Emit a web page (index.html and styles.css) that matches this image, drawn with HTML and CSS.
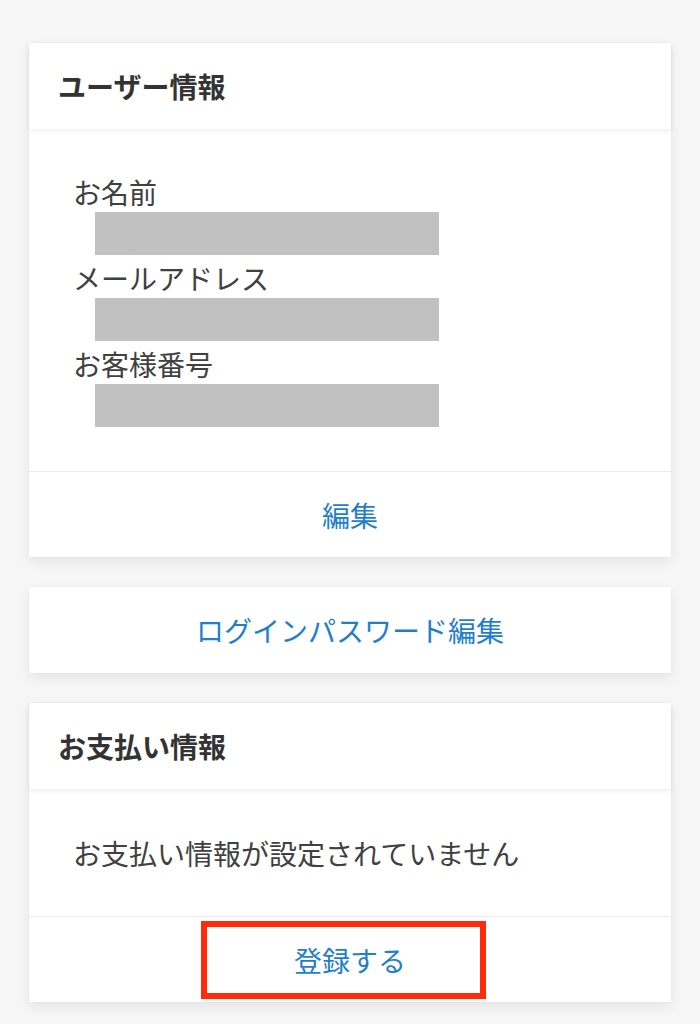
FILE: index.html
```html
<!DOCTYPE html>
<html lang="ja">
<head>
<meta charset="utf-8">
<title>ユーザー情報</title>
<link rel="stylesheet" href="styles.css">
</head>
<body>
<main class="page">
  <section class="card">
    <header class="card-header">ユーザー情報</header>
    <div class="card-body info">
      <div class="field">
        <div class="label">お名前</div>
        <div class="mask"></div>
      </div>
      <div class="field">
        <div class="label">メールアドレス</div>
        <div class="mask"></div>
      </div>
      <div class="field">
        <div class="label">お客様番号</div>
        <div class="mask"></div>
      </div>
    </div>
    <div class="card-footer"><a class="link">編集</a></div>
  </section>

  <section class="card">
    <div class="card-row"><a class="link">ログインパスワード編集</a></div>
  </section>

  <section class="card">
    <header class="card-header">お支払い情報</header>
    <div class="card-body message">お支払い情報が設定されていません</div>
    <div class="card-footer annotated">
      <a class="link">登録する</a>
      <span class="highlight"></span>
    </div>
  </section>
</main>
</body>
</html>
```

FILE: styles.css
```css
html, body {
  margin: 0;
  padding: 0;
}
body {
  background: #f6f6f6;
  font-family: "Noto Sans CJK JP", "Noto Sans", sans-serif;
  color: #3a3a3a;
}
.page {
  display: flex;
  flex-direction: column;
  gap: 30px;
  padding: 43px 29px 20px;
}
.card {
  background: #fff;
  box-shadow: 0 5px 12px rgba(0, 0, 0, 0.07), 0 0 3px rgba(0, 0, 0, 0.04);
  display: flex;
  flex-direction: column;
}
.card-header {
  height: 86px;
  display: flex;
  align-items: center;
  padding-left: 29px;
  font-size: 28px;
  font-weight: 700;
  color: #333;
  box-shadow: 0 2px 5px rgba(0, 0, 0, 0.07);
  position: relative;
  z-index: 1;
}
.card-body {
  padding-left: 44px;
}
.info {
  padding-top: 45px;
  padding-bottom: 44px;
  display: flex;
  flex-direction: column;
  gap: 5px;
}
.field {
  display: flex;
  flex-direction: column;
  gap: 2px;
}
.label {
  font-size: 28px;
  line-height: 36px;
  color: #404040;
}
.mask {
  margin-left: 22px;
  width: 344px;
  height: 43px;
  background: #c1c1c1;
}
.message {
  height: 127px;
  display: flex;
  align-items: center;
  font-size: 28px;
  color: #404040;
}
.card-footer {
  height: 85px;
  border-top: 1px solid #ebebeb;
  display: flex;
  align-items: center;
  justify-content: center;
}
.card-row {
  height: 86px;
  display: flex;
  align-items: center;
  justify-content: center;
}
.link {
  font-size: 28px;
  color: #1f7fcc;
  text-decoration: none;
}
.annotated {
  position: relative;
}
.highlight {
  position: absolute;
  left: 172px;
  top: 4px;
  width: 273px;
  height: 66px;
  border: 6px solid #fe2b0a;
}
```
